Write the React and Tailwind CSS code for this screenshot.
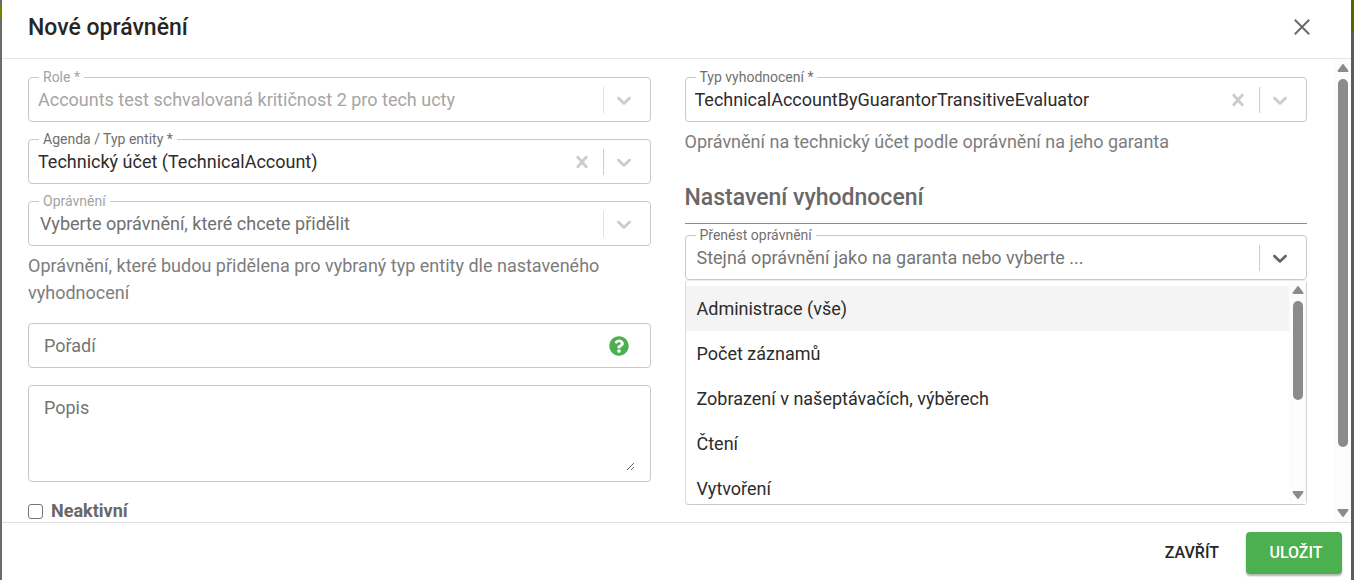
import { useState } from 'react';
import clsx from 'clsx';
import { FaQuestionCircle } from 'react-icons/fa';

const permissions = [
  'Administrace (vše)',
  'Počet záznamů',
  'Zobrazení v našeptávačích, výběrech',
  'Čtení',
  'Vytvoření',
];

const ChevronIcon = () => (
  <svg viewBox="0 0 20 20" className="size-6 fill-current" aria-hidden="true">
    <path d="M4.516 7.548c0.436-0.446 1.043-0.481 1.576 0l3.908 3.747 3.908-3.747c0.533-0.481 1.141-0.446 1.574 0 0.436 0.445 0.408 1.197 0 1.615-0.406 0.418-4.695 4.502-4.695 4.502-0.217 0.223-0.502 0.335-0.787 0.335s-0.57-0.112-0.789-0.335c0 0-4.287-4.084-4.695-4.502s-0.436-1.17 0-1.615z" />
  </svg>
);

const ClearIcon = () => (
  <svg viewBox="0 0 20 20" className="size-6 fill-current" aria-hidden="true">
    <path d="M14.348 14.849c-0.469 0.469-1.229 0.469-1.697 0l-2.651-3.030-2.651 3.029c-0.469 0.469-1.229 0.469-1.697 0-0.469-0.469-0.469-1.229 0-1.697l2.758-3.15-2.759-3.152c-0.469-0.469-0.469-1.228 0-1.697s1.228-0.469 1.697 0l2.652 3.031 2.651-3.031c0.469-0.469 1.228-0.469 1.697 0s0.469 1.229 0 1.697l-2.758 3.152 2.758 3.15c0.469 0.469 0.469 1.229 0 1.698z" />
  </svg>
);

const Arrow = ({ down }) => (
  <svg viewBox="0 0 12 10" className={clsx('h-[10px] w-3 shrink-0', down && 'rotate-180')} aria-hidden="true">
    <path d="M6 2L10.5 8H1.5Z" fill="#8b8b8b" stroke="#8b8b8b" strokeWidth="2" strokeLinejoin="round" />
  </svg>
);

const ScrollBar = ({ thumb }) => (
  <div className="flex w-[17px] shrink-0 flex-col items-center bg-[#fcfcfc] py-1">
    <Arrow />
    <div className="my-1.5 w-[10px] flex-1">
      <div className="rounded-full bg-[#8b8b8b]" style={{ height: `${thumb}%` }}></div>
    </div>
    <Arrow down />
  </div>
);

const Field = ({ id, label, muted, clearable, active, children }) => (
  <div className="relative flex h-[45px] items-center rounded border border-[#c8c8c8]">
    <label
      htmlFor={id}
      className={clsx(
        'absolute -top-[11px] left-2.5 bg-white px-1 text-[14px] leading-5',
        muted ? 'text-[#a3a3a3]' : 'text-[#707070]'
      )}
    >
      {label}
    </label>
    {children}
    {clearable && (
      <button type="button" aria-label="Vymazat" className="mr-[9px] text-[#cccccc]">
        <ClearIcon />
      </button>
    )}
    <span className={clsx('h-[26px] w-px', muted ? 'bg-[#e2e2e2]' : 'bg-[#cccccc]')}></span>
    <span className={clsx('pointer-events-none mr-3.5 ml-2', active ? 'text-[#666666]' : 'text-[#cccccc]')}>
      <ChevronIcon />
    </span>
  </div>
);

const Select = ({ id, value, disabled, className }) => (
  <select
    id={id}
    disabled={disabled}
    className={clsx('h-full min-w-0 flex-1 appearance-none bg-transparent text-[18px] outline-none disabled:opacity-100', className)}
  >
    <option>{value}</option>
  </select>
);

const Hint = ({ children }) => (
  <p className="mt-1.5 text-[18px] leading-[27px] text-[#7d7d7d]">{children}</p>
);

const PermissionPicker = () => {
  const [selected, setSelected] = useState(0);
  return (
    <div className="relative mt-[11px]">
      <Field id="transfer" label="Přenést oprávnění" active>
        <input
          id="transfer"
          role="combobox"
          aria-expanded="true"
          aria-controls="transfer-list"
          placeholder="Stejná oprávnění jako na garanta nebo vyberte ..."
          className="h-full min-w-0 flex-1 pl-[11px] text-[18px] outline-none placeholder:text-[#757575]"
        />
      </Field>
      <div className="absolute inset-x-0 top-full flex h-[225px] rounded border border-t-[#ececec] border-r-[#d2d2d2] border-b-[#c8c8c8] border-l-[#dcdcdc] bg-white">
        <ul
          id="transfer-list"
          role="listbox"
          className="min-w-0 flex-1 overflow-y-auto pt-[5px] [scrollbar-width:none]"
        >
          {permissions.map((name, idx) => (
            <li
              key={name}
              role="option"
              aria-selected={idx === selected}
              onMouseEnter={() => setSelected(idx)}
              className={clsx(
                'h-[45px] px-[11px] text-[18px] leading-[45px] text-[#2c2c2c]',
                idx === selected && 'bg-[#f4f4f4]'
              )}
            >
              {name}
            </li>
          ))}
        </ul>
        <ScrollBar thumb={54} />
      </div>
    </div>
  );
};

const App = () => {
  return (
    <div className="flex h-screen bg-[#5c5c5c] font-[Roboto,sans-serif]">
      <div className="w-0.5 shrink-0 bg-[#6b6b6b] pt-1.5">
        <div className="h-3 bg-[#6f8800]"></div>
      </div>
      <div role="dialog" aria-labelledby="dialog-title" className="flex min-w-0 flex-1 flex-col bg-white">
        <header className="flex h-[59px] shrink-0 items-center justify-between border-b border-[#e6e6e6] pr-[37px] pb-0.5 pl-[26px]">
          <h2 id="dialog-title" className="text-[23px] font-medium text-[#262626]">Nové oprávnění</h2>
          <button type="button" aria-label="Zavřít" className="text-[#6b6b6b]">
            <svg viewBox="0 0 24 24" className="size-6" fill="none" stroke="currentColor" strokeWidth="2" aria-hidden="true">
              <path d="M4.8 3.8L19.2 18.2M19.2 3.8L4.8 18.2" />
            </svg>
          </button>
        </header>

        <div className="flex min-h-0 flex-1">
          <form id="permission-form" className="grid flex-1 grid-cols-2 items-start gap-[34px] overflow-y-auto pt-[18px] pr-[27px] pl-[26px] [scrollbar-width:none]">
            <div className="flex flex-col gap-[17px]">
              <Field id="role" label="Role *" muted>
                <Select
                  id="role"
                  disabled
                  value="Accounts test schvalovaná kritičnost 2 pro tech ucty"
                  className="pl-[9px] text-[#a5a5a5]"
                />
              </Field>
              <Field id="entity" label="Agenda / Typ entity *" clearable>
                <Select id="entity" value="Technický účet (TechnicalAccount)" className="pl-[9px] text-[#2c2c2c]" />
              </Field>
              <div>
                <Field id="permission" label="Oprávnění" muted>
                  <Select
                    id="permission"
                    disabled
                    value="Vyberte oprávnění, které chcete přidělit"
                    className="pl-[11px] text-[#707070]"
                  />
                </Field>
                <Hint>Oprávnění, které budou přidělena pro vybraný typ entity dle nastaveného vyhodnocení</Hint>
              </div>
              <div className="flex h-[45px] items-center rounded border border-[#c8c8c8] pr-[21px] pl-[15px]">
                <input
                  aria-label="Pořadí"
                  placeholder="Pořadí"
                  className="h-full min-w-0 flex-1 text-[18px] outline-none placeholder:text-[#757575]"
                />
                <FaQuestionCircle className="size-5 text-[#4caf50]" />
              </div>
              <div className="flex rounded border border-[#c8c8c8] px-[15px] pt-2 pb-[10px]">
                <textarea
                  aria-label="Popis"
                  placeholder="Popis"
                  className="h-[77px] flex-1 resize text-[18px] leading-[27px] outline-none placeholder:text-[#757575]"
                ></textarea>
              </div>
              <div className="flex items-center gap-2 pb-5">
                <input
                  id="inactive"
                  type="checkbox"
                  className="size-[15px] appearance-none rounded-[3px] border border-[#767676] bg-white checked:bg-[#4caf50]"
                />
                <label htmlFor="inactive" className="text-[18px] leading-6 font-bold text-[#686868]">Neaktivní</label>
              </div>
            </div>

            <div>
              <Field id="evaluator" label="Typ vyhodnocení *" clearable>
                <Select
                  id="evaluator"
                  value="TechnicalAccountByGuarantorTransitiveEvaluator"
                  className="pl-[9px] text-[#2c2c2c]"
                />
              </Field>
              <Hint>Oprávnění na technický účet podle oprávnění na jeho garanta</Hint>
              <h3 className="mt-[27px] mb-[9px] text-[23px] leading-8 font-medium text-[#686868]">
                Nastavení vyhodnocení
              </h3>
              <hr className="h-px border-0 bg-[#f0588a]" />
              <PermissionPicker />
            </div>
          </form>
          <ScrollBar thumb={87} />
        </div>

        <footer className="flex shrink-0 items-center justify-end gap-[9px] border-t border-[#e0e0e0] px-[9px] pt-[9px] pb-1.5">
          <button type="button" className="h-[42px] px-[18px] text-[16px] font-medium text-[#262626]">ZAVŘÍT</button>
          <button
            type="submit"
            form="permission-form"
            className="h-[42px] w-24 rounded bg-[#4caf50] pl-1 text-[16px] font-medium text-white shadow-[0_2px_2px_rgba(0,0,0,0.3)]"
          >
            ULOŽIT
          </button>
        </footer>
      </div>
      <div className="w-[3px] shrink-0">
        <div className="h-8 bg-[#4f6b00]"></div>
      </div>
    </div>
  );
};

export default App;
